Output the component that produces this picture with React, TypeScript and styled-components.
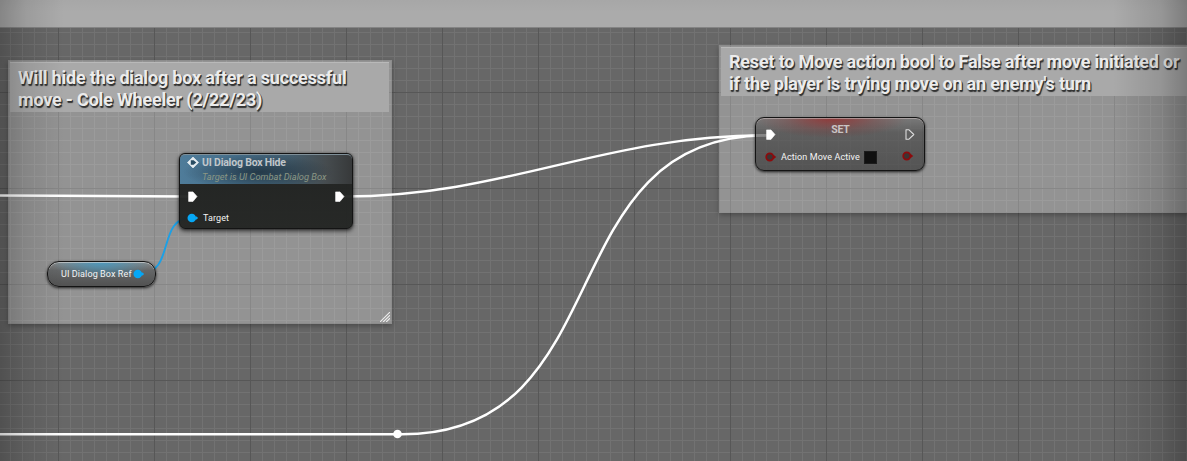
import React from "react";
import styled, { createGlobalStyle } from "styled-components";

const GlobalStyle = createGlobalStyle`
  * { box-sizing: border-box; }
  body { margin: 0; overflow: hidden; background: #666; }
`;

const BAR = 27;

const Editor = styled.div`
  position: relative;
  display: flex;
  flex-direction: column;
  width: 1187px;
  height: 461px;
  overflow: hidden;
  font-family: Roboto, "Liberation Sans", sans-serif;
`;

const TopBar = styled.header`
  flex: 0 0 ${BAR}px;
  background: #ababab;
`;

const Graph = styled.main`
  position: relative;
  flex: 1;
  overflow: hidden;
  border-top: 1px solid #848484;
  background-color: #676767;
  background-image:
    linear-gradient(90deg, #575757 1px, transparent 1px),
    linear-gradient(#575757 1px, transparent 1px),
    linear-gradient(90deg, #727272 1px, transparent 1px),
    linear-gradient(#727272 1px, transparent 1px);
  background-size: 96px 96px, 96px 96px, 12px 12px, 12px 12px;
  background-position: 58px 0, 0 64px, 10px 0, 0 4px;
`;

const Vignette = styled.div`
  position: absolute;
  inset: 0;
  pointer-events: none;
  background:
    linear-gradient(90deg, rgba(0, 0, 0, 0.22), rgba(0, 0, 0, 0.09) 26px, transparent 64px),
    linear-gradient(270deg, rgba(0, 0, 0, 0.27), rgba(0, 0, 0, 0.12) 26px, transparent 74px),
    linear-gradient(rgba(0, 0, 0, 0.025), transparent 12px);
`;

type Box = { $x: number; $y: number; $w: number; $h: number };

const Placed = styled.div<Box>`
  position: absolute;
  left: ${(p) => p.$x}px;
  top: ${(p) => p.$y - BAR - 1}px;
  width: ${(p) => p.$w}px;
  height: ${(p) => p.$h}px;
`;

const Comment = styled(Placed)<{ $titleHeight: number }>`
  display: grid;
  grid-template-rows: ${(p) => p.$titleHeight}px 1fr;
  padding: 1px 2px 2px 1px;
  background: rgba(255, 255, 255, 0.29);
  border: 1px solid rgba(130, 130, 130, 0.4);
  box-shadow: 0 2px 5px rgba(0, 0, 0, 0.28);
`;

const CommentTitle = styled.h2<{ $top: number }>`
  margin: 0;
  padding: ${(p) => p.$top}px 0 0 8px;
  background: #a9a9a9;
  border-top: 1px solid #b9b9b9;
  color: #ececec;
  font-size: 18px;
  font-weight: 700;
  line-height: 22px;
  letter-spacing: -0.19px;
  white-space: nowrap;
  text-shadow: 1px 1px 0 #333, 1px 1.5px 1px #333;
`;

const ResizeGrip = styled.svg`
  position: absolute;
  right: 1px;
  bottom: 1px;
`;

const Wires = styled.svg`
  position: absolute;
  left: 0;
  top: -1px;
  fill: none;
  stroke-linecap: round;
`;

const NodeFrame = styled(Placed)`
  border: 1px solid #141414;
  box-shadow: 0 2px 4px rgba(0, 0, 0, 0.65), 0 0 2px rgba(0, 0, 0, 0.5);
`;

const FunctionNode = styled(NodeFrame)`
  border-radius: 6px;
  background: linear-gradient(rgba(28, 30, 29, 0.95), rgba(33, 35, 33, 0.95));
`;

const FunctionHeader = styled.div`
  display: flex;
  height: 30px;
  padding: 1px 0 0 7px;
  gap: 3px;
  border-radius: 5px 5px 0 0;
  border-top: 1px solid #7f8f98;
  background:
    radial-gradient(ellipse 75px 18px at 78px 17px, rgba(24, 40, 52, 0.72), transparent),
    linear-gradient(90deg, #4f7c9a 0%, #456d88 35%, #435f71 60%, #464c4f 85%, #37393a 100%);
`;

const HeaderText = styled.div`
  display: flex;
  flex-direction: column;
`;

const FunctionTitle = styled.span`
  color: #c0c6ca;
  font-size: 10.5px;
  font-weight: 700;
  line-height: 14px;
  letter-spacing: -0.2px;
  white-space: nowrap;
`;

const FunctionSubtitle = styled.span`
  color: #8b9784;
  font-size: 9.3px;
  font-style: italic;
  line-height: 14px;
  white-space: nowrap;
`;

const PinRow = styled.div<{ $h: number; $top?: number; $left?: number; $right?: number }>`
  display: flex;
  align-items: center;
  height: ${(p) => p.$h}px;
  margin-top: ${(p) => p.$top ?? 0}px;
  padding: 0 ${(p) => p.$right ?? 8}px 0 ${(p) => p.$left ?? 8}px;
`;

const Spacer = styled.span`
  flex: 1;
`;

const PinLabel = styled.span<{ $gap: number }>`
  margin-left: ${(p) => p.$gap}px;
  color: #f4f4f4;
  font-size: 9px;
  line-height: 12px;
  letter-spacing: 0.1px;
  white-space: nowrap;
`;

const VariableNode = styled(NodeFrame)`
  display: flex;
  align-items: center;
  padding: 0 10px 0 13px;
  border-radius: 12px;
  background:
    radial-gradient(ellipse 50px 17px at 50% 0, rgba(66, 155, 198, 0.85), transparent),
    linear-gradient(#8a8a8a, #646667 35%, #525252);
  box-shadow: inset 0 1px 0 rgba(220, 220, 220, 0.6), 0 1px 3px rgba(0, 0, 0, 0.8);
`;

const SetNode = styled(NodeFrame)`
  border-radius: 9px;
  background:
    radial-gradient(ellipse 76px 20px at 45% 0, rgba(150, 42, 42, 0.8), rgba(130, 50, 50, 0.3) 60%, transparent),
    linear-gradient(rgba(115, 115, 115, 0.8), rgba(62, 62, 62, 0.62) 28%, rgba(54, 54, 54, 0.68));
  box-shadow: inset 0 1px 0 rgba(205, 195, 195, 0.55), 0 1px 3px rgba(0, 0, 0, 0.8);
`;

const SetTitle = styled.span`
  flex: 1;
  text-align: center;
  transform: translateY(-5px);
  color: #c9c4c4;
  font-size: 10.5px;
  font-weight: 700;
  line-height: 12px;
  letter-spacing: -0.2px;
`;

const Checkbox = styled.span`
  width: 13px;
  height: 13px;
  margin-left: 4px;
  background: #101010;
  border: 1px solid #1c1c1c;
`;

const Raised = styled.span`
  display: flex;
  transform: translateY(-1px);
`;

const ExecPin = ({ hollow = false }: { hollow?: boolean }) => (
  <svg width="10" height="11" viewBox="0 0 10 11">
    <path
      d={hollow ? "M1 .8H4L8.8 5.5 4 10.2H1Z" : "M.6.9H5L9 5.5 5 10.4H.6Z"}
      fill={hollow ? "none" : "#fff"}
      stroke={hollow ? "#ddd" : "#fff"}
      strokeWidth={hollow ? 1.1 : 0.6}
      strokeLinejoin="round"
    />
  </svg>
);

const DataPin = ({ color, hollow = false }: { color: string; hollow?: boolean }) => (
  <svg width="12" height="10" viewBox="0 0 12 10">
    <circle cx="4.8" cy="5" r={hollow ? 3.6 : 4.3} fill={hollow ? "#3d3333" : color} stroke={color} strokeWidth={hollow ? 1.7 : 0} />
    <path d="M8.8 3 11.2 5 8.8 7Z" fill={color} />
  </svg>
);

const EventIcon = () => (
  <svg width="12" height="13" viewBox="0 0 12 13">
    <path d="M6 1 11.6 6.5 6 12 .4 6.5Z" fill="#e4ebef" stroke="#e4ebef" strokeWidth="0.7" strokeLinejoin="round" />
    <path d="M3.8 4.2H6.6L9.3 6.5 6.6 8.8H3.8Z" fill="#294c62" />
  </svg>
);

export default function App() {
  return (
    <Editor>
      <GlobalStyle />
      <TopBar />
      <Graph>
        <Comment $x={8} $y={60} $w={384} $h={264} $titleHeight={50}>
          <CommentTitle $top={4}>
            Will hide the dialog box after a successful
            <br />
            move - Cole Wheeler (2/22/23)
          </CommentTitle>
          <ResizeGrip width="10" height="10" viewBox="0 0 10 10" stroke="#eee" strokeWidth="1.1">
            <path d="M0 10 10 0M3.2 10 10 3.2M6.2 10 10 6.2" />
          </ResizeGrip>
        </Comment>
        <Comment $x={719} $y={45} $w={480} $h={168} $titleHeight={49}>
          <CommentTitle $top={3}>
            Reset to Move action bool to False after move initiated or
            <br />
            if the player is trying move on an enemy's turn
          </CommentTitle>
        </Comment>

        <Wires width="1187" height="434" viewBox="0 27 1187 434">
          <g stroke="#fff" strokeWidth="2.5">
            <path d="M-5 195.5C60 195.5 130 196.5 189 196.5" />
            <path d="M344 196.5C505 196.5 604 135.3 765 135.3" />
            <path d="M-5 434.3H402C624 434.3 546 135.3 768 135.3" />
          </g>
          <circle cx="397.5" cy="434" r="4.3" fill="#fff" />
          <path d="M140 273.5C176 273.5 156 217.5 192 217.5" stroke="#1ba0e6" strokeWidth="1.9" />
        </Wires>

        <FunctionNode $x={179} $y={153} $w={174} $h={76}>
          <FunctionHeader>
            <EventIcon />
            <HeaderText>
              <FunctionTitle>UI Dialog Box Hide</FunctionTitle>
              <FunctionSubtitle>Target is UI Combat Dialog Box</FunctionSubtitle>
            </HeaderText>
          </FunctionHeader>
          <PinRow $h={11} $top={7} $right={7}>
            <ExecPin />
            <Spacer />
            <ExecPin />
          </PinRow>
          <PinRow $h={12} $top={10} $left={7}>
            <DataPin color="#06a7f5" />
            <PinLabel $gap={4}>Target</PinLabel>
          </PinRow>
        </FunctionNode>

        <VariableNode $x={47} $y={261} $w={109} $h={26}>
          <PinLabel $gap={0}>UI Dialog Box Ref</PinLabel>
          <Spacer />
          <DataPin color="#06a7f5" />
        </VariableNode>

        <SetNode $x={755} $y={117} $w={170} $h={54}>
          <PinRow $h={11} $top={11} $left={10} $right={9}>
            <ExecPin />
            <SetTitle>SET</SetTitle>
            <ExecPin hollow />
          </PinRow>
          <PinRow $h={14} $top={10} $left={9} $right={10}>
            <DataPin color="#8d0a0c" hollow />
            <PinLabel $gap={4}>Action Move Active</PinLabel>
            <Checkbox />
            <Spacer />
            <Raised>
              <DataPin color="#8d0a0c" hollow />
            </Raised>
          </PinRow>
        </SetNode>
      </Graph>
      <Vignette />
    </Editor>
  );
}
